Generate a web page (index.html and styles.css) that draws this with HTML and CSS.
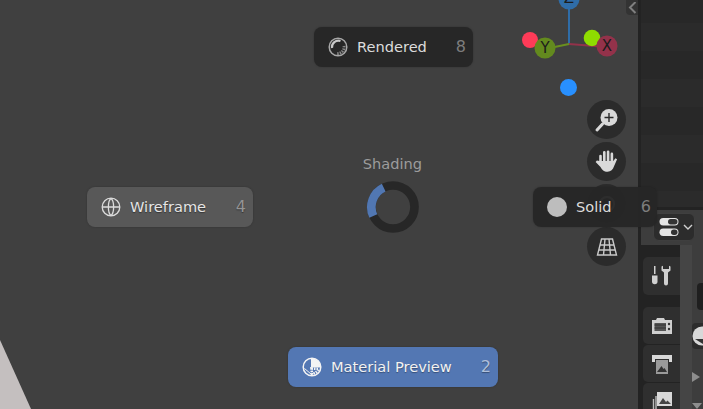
FILE: index.html
```html
<!DOCTYPE html>
<html lang="en">
  <head>
    <meta charset="UTF-8" />
    <title>Shading</title>
    <link rel="stylesheet" href="styles.css">
  </head>
  <body>
    <div class="app">
      <div class="viewport">
        <svg class="floor" width="40" height="79" viewBox="0 0 40 79"><polygon points="0,10 31,79 0,79" fill="#c4bfbf"/></svg>

        <svg class="gizmo" width="110" height="64" viewBox="0 0 110 64">
          <line x1="49" y1="44" x2="49" y2="4" stroke="#2f6da8" stroke-width="2"/>
          <line x1="49" y1="44" x2="87" y2="47" stroke="#93324a" stroke-width="2"/>
          <line x1="49" y1="44" x2="25" y2="49" stroke="#6a8f1f" stroke-width="2"/>
          <circle cx="49" cy="-1" r="10.5" fill="#2f6da8"/>
          <circle cx="10" cy="40" r="8" fill="#fe3b58"/>
          <circle cx="25" cy="48" r="10.5" fill="#638a1e"/>
          <circle cx="72" cy="38" r="8.3" fill="#8fdc00"/>
          <circle cx="87" cy="46" r="10.5" fill="#93324a"/>
          <text x="25" y="53" class="axis">Y</text>
          <text x="87" y="51" class="axis">X</text>
          <text x="49" y="3" class="axis">Z</text>
        </svg>
        <div class="blue-dot"></div>

        <div class="round-btn zoom-btn">
          <svg width="26" height="26" viewBox="0 0 26 26">
            <circle cx="15" cy="10.500" r="8.500" fill="#d9d9d9"/>
            <path d="M15 6v9M10.500 10.500h9" stroke="#2a2a2a" stroke-width="1.400"/>
            <path d="M8.500 17L3 23" stroke="#d9d9d9" stroke-width="3" stroke-linecap="round"/>
          </svg>
        </div>
        <div class="round-btn hand-btn">
          <svg width="26" height="26" viewBox="0 0 24 24">
            <path d="M6 12V6.500M9.500 11V3M13 11V2.500M16.500 11.500V4.500" stroke="#d9d9d9" stroke-width="2.400" stroke-linecap="round"/>
            <path d="M5 11l3 0h9.800l2-2.500 1.500 1-2.800 6.500c-1 3-3 5-6 5-3.500 0-5-2-6.500-4.500L1.500 12l1.200-1.300z" fill="#d9d9d9"/>
          </svg>
        </div>
        <div class="round-btn camera-btn">
          <svg width="22" height="22" viewBox="0 0 22 22" fill="none" stroke="#d0d0d0" stroke-width="2">
            <circle cx="11" cy="11" r="7"/>
          </svg>
        </div>
        <div class="round-btn grid-btn">
          <svg width="24" height="24" viewBox="0 0 24 24" fill="none" stroke="#c9c9c9" stroke-width="1.400">
            <path d="M6.500 4h11L21.500 20h-19zM5 10h14M3.800 15h16.400M10 4l-1.500 16M14 4l1.500 16"/>
          </svg>
        </div>

        <div class="corner-tab">
          <svg width="9" height="13" viewBox="0 0 9 13"><path d="M7.500 0L2 5.500 7.500 11" fill="none" stroke="#7f7f7f" stroke-width="2"/></svg>
        </div>

        <div class="pie-title">Shading</div>
        <svg class="pie-ring" width="54" height="54" viewBox="0 0 54 54">
          <circle cx="27" cy="27" r="21.500" fill="none" stroke="#272727" stroke-width="8.700"/>
          <path d="M17.700 7.600A21.500 21.500 0 0 0 7.300 36" fill="none" stroke="#5177b2" stroke-width="8.700"/>
        </svg>

        <div class="pie-item rendered">
          <svg class="pie-icon" width="20" height="20" viewBox="0 0 20 20" fill="none">
            <circle cx="10" cy="10" r="8.800" stroke="#a8a8a8" stroke-width="1.500"/>
            <path d="M4 11A6.500 6.500 0 0 1 12.500 4" stroke="#c8c8c8" stroke-width="2.200"/>
            <path d="M16 9a6.500 6.500 0 0 1-7 7.500" stroke="#8a8a8a" stroke-width="3" stroke-dasharray="1.500 1"/>
          </svg>
          <span class="pie-label">Rendered</span>
          <span class="pie-key">8</span>
        </div>
        <div class="pie-item wireframe">
          <svg class="pie-icon" width="20" height="20" viewBox="0 0 20 20" fill="none" stroke="#dcdcdc" stroke-width="1.300">
            <circle cx="10" cy="10" r="8.800"/>
            <path d="M1.500 10h17M10 1.500c-3.500 2.500-3.500 14.500 0 17M10 1.500c3.500 2.500 3.500 14.500 0 17"/>
          </svg>
          <span class="pie-label">Wireframe</span>
          <span class="pie-key">4</span>
        </div>
        <div class="pie-item solid">
          <div class="solid-dot"></div>
          <span class="pie-label">Solid</span>
          <span class="pie-key">6</span>
        </div>
        <div class="pie-item material">
          <svg class="pie-icon" width="20" height="20" viewBox="0 0 20 20" fill="none">
            <circle cx="10" cy="10" r="8.800" stroke="#f4f4f4" stroke-width="1.500"/>
            <path d="M9 1.500A8.500 8.500 0 0 1 18.500 10.500H9z" fill="#f4f4f4"/>
            <path d="M9.500 11.500l7 .5-2.500 3.500-4 1.500z" stroke="#f4f4f4" stroke-width="2.600" stroke-dasharray="1.500 1"/>
            <path d="M2.500 11.500L9 17" stroke="#f4f4f4" stroke-width="1"/>
          </svg>
          <span class="pie-label">Material Preview</span>
          <span class="pie-key">2</span>
        </div>
      </div>

      <div class="sidebar">
        <div class="outliner">
          <div class="strip first"></div>
          <div class="strip alt"></div>
          <div class="strip"></div>
          <div class="strip alt"></div>
          <div class="strip"></div>
          <div class="strip alt"></div>
          <div class="strip"></div>
          <div class="strip alt"></div>
        </div>
        <div class="prop-header">
          <div class="filter-btn">
            <svg width="20" height="20" viewBox="0 0 20 20">
              <rect x="0.500" y="1" width="19" height="7.500" rx="3.700" fill="#e4e4e4"/>
              <rect x="9" y="2" width="9.500" height="5.500" rx="2.700" fill="#333"/>
              <rect x="0.500" y="11.500" width="19" height="7.500" rx="3.700" fill="#e4e4e4"/>
              <rect x="12" y="12.500" width="6.500" height="5.500" rx="2.700" fill="#333"/>
            </svg>
            <svg width="10" height="7" viewBox="0 0 10 7"><path d="M1 1l4 4 4-4" fill="none" stroke="#d0d0d0" stroke-width="1.400"/></svg>
          </div>
        </div>
        <div class="props">
          <div class="tabs">
            <div class="tab first">
              <svg width="24" height="24" viewBox="0 0 24 24" fill="#d0d0d0">
                <rect x="4" y="2" width="1.500" height="8"/>
                <path d="M2 11.500h5.500v6a2.700 2.700 0 0 1-5.500 0z"/>
                <path d="M11.500 2.500v4l2.500 2v11a2 2 0 0 0 4 0v-11l2.500-2v-4l-1.500-.800v3.300h-6V1.700z"/>
              </svg>
            </div>
            <div class="tab">
              <svg width="22" height="22" viewBox="0 0 22 22" fill="#d0d0d0">
                <path d="M1 5h4l1-2h7l1 2h7v14H1z"/>
                <rect x="3.500" y="8" width="11.500" height="8" fill="#555"/>
                <path d="M3.500 10h11.500M3.500 13h11.500" stroke="#333" stroke-width="1"/>
                <circle cx="18" cy="9" r="1.200" fill="#333"/>
                <circle cx="18" cy="14" r="1.200" fill="#333"/>
              </svg>
            </div>
            <div class="tab">
              <svg width="22" height="22" viewBox="0 0 22 22">
                <path d="M1 2h20v7h-3V6H4v3H1z" fill="#d8d8d8"/>
                <rect x="5" y="7" width="12" height="14" fill="#9a9a9a"/>
                <path d="M6 19l4.500-6 2 3 1-1 2.500 4z" fill="#333"/>
              </svg>
            </div>
            <div class="tab">
              <svg width="22" height="22" viewBox="0 0 22 22">
                <rect x="6" y="1" width="15" height="14" fill="#d8d8d8"/>
                <path d="M8 13l4-6 3 4 1.500-1.500L20 13z" fill="#444"/>
                <path d="M2.500 8v14M5 5v17" stroke="#bdbdbd" stroke-width="1.400"/>
              </svg>
            </div>
          </div>
          <div class="gutter"></div>
          <div class="panel">
            <div class="black-box"></div>
            <div class="sphere-box">
              <svg width="11" height="20" viewBox="0 0 11 20">
                <circle cx="10" cy="10" r="9.500" fill="#d8d8d8"/>
                <path d="M3 13h8v5z" fill="#333"/>
              </svg>
            </div>
            <div class="panel-arrow"></div>
            <div class="panel-arrow down"></div>
          </div>
        </div>
      </div>
    </div>
  </body>
</html>
```

FILE: styles.css
```css
* {
  box-sizing: border-box;
}

html,
body {
  margin: 0;
  width: 703px;
  height: 409px;
  overflow: hidden;
  background: #232323;
  font-family: "DejaVu Sans", sans-serif;
}

.app {
  display: flex;
  height: 409px;
  overflow: hidden;
}

/* 3d view, things in here sit on a free canvas */
.viewport {
  position: relative;
  width: 638px;
  flex: none;
  background: #404040;
}

.floor {
  position: absolute;
  left: 0;
  top: 330px;
}

.gizmo {
  position: absolute;
  left: 520px;
  top: 0;
}

.axis {
  font-size: 15px;
  text-anchor: middle;
  fill: #1c1c1c;
}

.blue-dot {
  position: absolute;
  left: 560px;
  top: 79px;
  width: 17px;
  height: 17px;
  border-radius: 50%;
  background: #2890ff;
}

.round-btn {
  position: absolute;
  left: 587px;
  width: 39px;
  height: 39px;
  border-radius: 50%;
  background: #2b2b2b;
  display: flex;
  align-items: center;
  justify-content: center;
}

.zoom-btn {
  top: 100px;
}

.hand-btn {
  top: 142px;
}

.camera-btn {
  top: 184px;
}

.grid-btn {
  top: 227px;
}

.corner-tab {
  position: absolute;
  right: 0;
  top: 0;
  width: 12px;
  height: 15px;
  background: #333333;
  border-bottom-left-radius: 4px;
  padding-left: 2px;
}

.pie-title {
  position: absolute;
  left: 352px;
  top: 155px;
  width: 81px;
  text-align: center;
  font-size: 14.6px;
  line-height: 18px;
  color: #9c9c9c;
}

.pie-ring {
  position: absolute;
  left: 366px;
  top: 180px;
}

.pie-item {
  position: absolute;
  height: 40px;
  border-radius: 8px;
  display: flex;
  align-items: center;
  gap: 9px;
  padding: 0 7px 0 14px;
  background: #272727;
  color: #dcdcdc;
  font-size: 14.6px;
  box-shadow: 0 0 2px rgba(0, 0, 0, 0.25);
}

.pie-label {
  margin-bottom: 2px;
}

.pie-key {
  margin: 0 0 2px auto;
  font-size: 16px;
  color: #7d7d7d;
}

.rendered {
  left: 314px;
  top: 27px;
  width: 159px;
}

.wireframe {
  left: 87px;
  top: 187px;
  width: 166px;
  background: #585858;
  color: #e6e6e6;
  text-shadow: 0 1px 1px rgba(0, 0, 0, 0.4);
}

.wireframe .pie-key {
  color: #949494;
}

.solid {
  left: 533px;
  top: 187px;
  width: 124px;
  padding-right: 6px;
  background: rgba(39, 39, 39, 0.96);
}

.solid-dot {
  width: 20px;
  height: 20px;
  border-radius: 50%;
  background: #bdbdbd;
}

.material {
  left: 288px;
  top: 347px;
  width: 210px;
  background: #5377b3;
  color: #f2f2f2;
  text-shadow: 0 1px 1px rgba(0, 0, 0, 0.35);
}

.material .pie-key {
  color: #b0c0db;
}

/* right hand editors */
.sidebar {
  flex: 1;
  min-width: 0;
  padding-left: 3px;
  display: flex;
  flex-direction: column;
}

.outliner {
  height: 207px;
  background: #282828;
  overflow: hidden;
}

.strip {
  height: 28px;
  background: #282828;
}

.strip.first {
  height: 23px;
}

.strip.alt {
  background: #2b2b2b;
}

.prop-header {
  height: 35px;
  margin-top: 3px;
  background: #3d3d3d;
  padding: 3px 0 0 12px;
}

.filter-btn {
  width: 42px;
  height: 28px;
  background: #2c2c2c;
  border: 1px solid #3f3f3f;
  border-radius: 6px;
  display: flex;
  align-items: center;
  gap: 4px;
  padding-left: 5px;
}

.props {
  flex: 1;
  display: flex;
  min-height: 0;
}

.tabs {
  width: 39px;
  flex: none;
  background: #232323;
  padding: 12px 0 0 2px;
  display: flex;
  flex-direction: column;
  gap: 1px;
}

.tab {
  height: 37px;
  flex: none;
  background: #2f2f2f;
  border-radius: 5px 0 0 5px;
  display: flex;
  align-items: center;
  justify-content: center;
}

.tab.first {
  height: 38px;
  margin-bottom: 11px;
}

.gutter {
  width: 12px;
  flex: none;
  background: #454545;
}

.panel {
  flex: 1;
  background: #3d3d3d;
  display: flex;
  flex-direction: column;
  align-items: flex-start;
}

.black-box {
  width: 6px;
  height: 28px;
  margin: 38px 0 0 5px;
  background: #1f1f1f;
  border-radius: 4px 0 0 4px;
}

.sphere-box {
  width: 100%;
  height: 26px;
  margin-top: 13px;
  background: #2c2c2c;
  border-radius: 4px 0 0 4px;
  overflow: hidden;
  display: flex;
  align-items: center;
  justify-content: flex-end;
}

.panel-arrow {
  margin-top: 23px;
  width: 0;
  height: 0;
  border-left: 8px solid #8d8d8d;
  border-top: 5px solid transparent;
  border-bottom: 5px solid transparent;
}

.panel-arrow.down {
  margin-top: 21px;
  border-left: 5px solid transparent;
  border-right: 5px solid transparent;
  border-top: 6px solid #8d8d8d;
  border-bottom: 0;
}
```
